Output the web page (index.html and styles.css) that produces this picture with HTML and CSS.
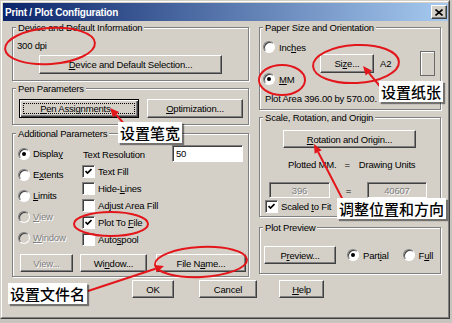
FILE: index.html
```html
<!DOCTYPE html>
<html lang="zh-CN">
<head>
  <meta charset="UTF-8" />
  <title>Print / Plot Configuration</title>
  <link rel="stylesheet" href="styles.css">
</head>
<body>

  <div class="window">
    <div class="frame">
      <div class="titlebar">
        <span class="title">Print / Plot Configuration</span>
        <span class="close"><svg width="8" height="7" viewBox="0 0 8 7"><path d="M0.5 0.5 L7.5 6.5 M7.5 0.5 L0.5 6.5" stroke="#000" stroke-width="1.6" /></svg></span>
      </div>

      <div class="client">
        <div class="columns">
          <div class="col col-left">

            <div class="group g-device">
              <div class="group-title">Device and Default Information</div>
              <div class="dpi">300 dpi</div>
              <button class="btn b-device"><u>D</u>evice and Default Selection...</button>
            </div>

            <div class="group g-pen">
              <div class="group-title">Pen Parameters</div>
              <div class="pen-row">
                <button class="btn btn-focus b-pen"><span class="focus"><u>P</u>en Assignments...</span></button>
                <button class="btn b-opt"><u>O</u>ptimization...</button>
              </div>
            </div>

            <div class="group g-add">
              <div class="group-title">Additional Parameters</div>
              <div class="add-body">
                <div class="area-col">
                  <label class="opt area"><span class="radio on"></span><span class="txt">Displa<u>y</u></span></label>
                  <label class="opt area"><span class="radio"></span><span class="txt">E<u>x</u>tents</span></label>
                  <label class="opt area"><span class="radio"></span><span class="txt"><u>L</u>imits</span></label>
                  <label class="opt area dis"><span class="radio"></span><span class="txt"><u>V</u>iew</span></label>
                  <label class="opt area dis"><span class="radio"></span><span class="txt"><u>W</u>indow</span></label>
                </div>
                <div class="param-col">
                  <div class="res-row"><span class="res-label">Text Resolution</span><span class="edit res-edit">50</span></div>
                  <label class="opt chk"><span class="check"><svg width="7" height="7" viewBox="0 0 7 7"><path d="M0.5 3 L2.5 5 L6.5 1" fill="none" stroke="#000" stroke-width="1.7" /></svg></span><span class="txt">Text Fill</span></label>
                  <label class="opt chk"><span class="check"></span><span class="txt">Hide-<u>L</u>ines</span></label>
                  <label class="opt chk"><span class="check"></span><span class="txt">Adjust Area Fill</span></label>
                  <label class="opt chk"><span class="check"><svg width="7" height="7" viewBox="0 0 7 7"><path d="M0.5 3 L2.5 5 L6.5 1" fill="none" stroke="#000" stroke-width="1.7" /></svg></span><span class="txt">Plot To <u>F</u>ile</span></label>
                  <label class="opt chk"><span class="check"></span><span class="txt">Auto<u>s</u>pool</span></label>
                </div>
              </div>
              <div class="add-buttons">
                <button class="btn dis b-view">View...</button>
                <button class="btn b-window">Wi<u>n</u>dow...</button>
                <button class="btn b-file">File N<u>a</u>me...</button>
              </div>
            </div>

          </div>

          <div class="col col-right">

            <div class="group g-paper">
              <div class="group-title">Paper Size and Orientation</div>
              <div class="paper-row">
                <div class="units">
                  <label class="opt"><span class="radio"></span><span class="txt">Inc<u>h</u>es</span></label>
                  <label class="opt"><span class="radio on"></span><span class="txt"><u>M</u>M</span></label>
                </div>
                <button class="btn b-size">Si<u>z</u>e...</button>
                <span class="size-name">A2</span>
                <span class="sheet"></span>
              </div>
              <div class="plot-area">Plot Area 396.00 by 570.00.</div>
            </div>

            <div class="group g-scale">
              <div class="group-title">Scale, Rotation, and Origin</div>
              <button class="btn b-rot"><u>R</u>otation and Origin...</button>
              <div class="units-line"><span>Plotted MM.</span><span class="eq">=</span><span class="du">Drawing Units</span></div>
              <div class="scale-row">
                <span class="edit dis-edit e-plot">396</span>
                <span class="eq2">=</span>
                <span class="edit dis-edit e-draw">40607</span>
              </div>
              <label class="opt fit"><span class="check"><svg width="7" height="7" viewBox="0 0 7 7"><path d="M0.5 3 L2.5 5 L6.5 1" fill="none" stroke="#000" stroke-width="1.7" /></svg></span><span class="txt">Scaled <u>t</u>o Fit</span></label>
            </div>

            <div class="group g-preview">
              <div class="group-title">Plot Preview</div>
              <div class="preview-row">
                <button class="btn b-preview">P<u>r</u>eview...</button>
                <label class="opt p-partial"><span class="radio on"></span><span class="txt">Part<u>i</u>al</span></label>
                <label class="opt p-full"><span class="radio"></span><span class="txt">F<u>u</u>ll</span></label>
              </div>
            </div>

          </div>
        </div>

        <div class="actions">
          <button class="btn b-ok">OK</button>
          <button class="btn b-cancel">Cancel</button>
          <button class="btn b-help"><u>H</u>elp</button>
        </div>
      </div>
    </div>
  </div>

  <!-- red marks drawn over the dialog -->
  <svg class="marks" width="452" height="323" viewBox="0 0 452 323">
    <g fill="none" stroke="#e3161b" stroke-width="2">
      <ellipse cx="50" cy="46" rx="45" ry="18" transform="rotate(-4 50 46)" />
      <ellipse cx="282" cy="80" rx="23" ry="15" />
      <ellipse cx="356" cy="64" rx="43" ry="19" transform="rotate(-3 356 64)" />
      <ellipse cx="111" cy="224" rx="37" ry="12" />
      <ellipse cx="201" cy="262" rx="46" ry="15" transform="rotate(-3 201 262)" />
      <line x1="383" y1="90" x2="368.8" y2="72.9" />
      <line x1="126" y1="126" x2="116" y2="114.7" />
      <line x1="345" y1="204" x2="318.1" y2="152" />
      <line x1="88" y1="291" x2="155.5" y2="268.8" />
    </g>
    <g fill="#e3161b">
      <polygon points="363,66 371.8,70.4 365.7,75.5" />
      <polygon points="110,108 119,112.1 113,117.4" />
      <polygon points="314,144 321.7,150.2 314.6,153.8" />
      <polygon points="164,266 156.7,272.6 154.2,265" />
    </g>
  </svg>

  <div class="note n-paper">设置纸张</div>
  <div class="note n-pen">设置笔宽</div>
  <div class="note n-origin">调整位置和方向</div>
  <div class="note n-file">设置文件名</div>

</body>
</html>
```

FILE: styles.css
```css
body { margin: 0; width: 452px; height: 323px; position: relative; overflow: hidden; background: #c8c5be; color: #000; font-family: "Liberation Sans", Arial, sans-serif; font-size: 9.5px; letter-spacing: -0.2px; line-height: 11px; }

/* window chrome */
.window { width: 450px; height: 319px; box-sizing: border-box; background: #d4d0c8; border: 1px solid; border-color: #d4d0c8 #404040 #404040 #d4d0c8; }
.frame { height: 100%; box-sizing: border-box; border: 1px solid; border-color: #fff #808080 #808080 #fff; padding: 1px 0 1px 1px; }
.titlebar { height: 18px; display: flex; align-items: center; padding: 0 1px 0 2px; background: linear-gradient(90deg, #0a246a, #a6caf0); }
.title { color: #fff; font-weight: bold; font-size: 10px; letter-spacing: -0.2px; }
.close { margin-left: auto; width: 16px; height: 14px; box-sizing: border-box; display: flex; align-items: center; justify-content: center; background: #d4d0c8; border: 1px solid; border-color: #fff #404040 #404040 #fff; box-shadow: inset -1px -1px 0 #808080; }

.client { padding-left: 9px; }
.columns { display: flex; }
.col { display: flex; flex-direction: column; }
.col-left { width: 237px; }
.col-right { width: 182px; margin-left: 10px; }

/* etched group boxes */
.group { box-sizing: border-box; border: 1px solid #808080; box-shadow: 1px 1px 0 #fff, inset 1px 1px 0 #fff; }
.group-title { width: max-content; height: 11px; margin: -6px 0 0 3px; padding: 0 2px; background: #d4d0c8; }

.g-device { margin-top: 6px; height: 54px; }
.g-pen { margin-top: 7px; height: 37px; }
.g-add { margin-top: 8px; height: 144px; }
.g-paper { margin-top: 6px; height: 83px; }
.g-scale { margin-top: 7px; height: 100px; }
.g-preview { margin-top: 10px; height: 47px; }

/* controls */
.btn { box-sizing: border-box; height: 19px; padding: 0; display: flex; align-items: center; justify-content: center; font: inherit; letter-spacing: inherit; color: #000; background: #d4d0c8; border: 1px solid; border-color: #fff #404040 #404040 #fff; box-shadow: inset -1px -1px 0 #808080; }
.btn-focus { border-color: #000; box-shadow: inset 1px 1px 0 #fff, inset -1px -1px 0 #404040, inset -2px -2px 0 #808080; }
.btn-focus .focus { flex: 1; align-self: stretch; margin: 3px; border: 1px dotted #000; display: flex; align-items: center; justify-content: center; }
.dis, .dis-edit { color: #808080; text-shadow: 1px 1px 0 #fff; }

.opt { display: flex; align-items: center; }
.radio { flex: none; width: 12px; height: 12px; box-sizing: border-box; border-radius: 50%; display: flex; align-items: center; justify-content: center; background: #fff; border: 1px solid; border-color: #808080 #fff #fff #808080; box-shadow: inset 1px 1px 0 #404040; }
.radio.on::after { content: ""; width: 4px; height: 4px; border-radius: 50%; background: #000; }
.dis .radio { background: #d4d0c8; }
.radio + .txt { margin-left: 3px; }
.check { flex: none; width: 13px; height: 13px; box-sizing: border-box; display: flex; align-items: center; justify-content: center; background: #fff; border: 1px solid; border-color: #808080 #fff #fff #808080; box-shadow: inset 1px 1px 0 #404040; }
.check + .txt { margin-left: 3px; }
.edit { box-sizing: border-box; display: flex; align-items: center; padding: 0 3px; background: #fff; border: 1px solid; border-color: #808080 #fff #fff #808080; box-shadow: inset 1px 1px 0 #404040; }
.dis-edit { background: #d4d0c8; justify-content: center; }

/* device */
.dpi { margin: 7px 0 0 4px; }
.b-device { margin: 4px 0 0 26px; width: 183px; }

/* pen */
.pen-row { display: flex; margin: 5px 0 0 6px; }
.b-pen { width: 120px; }
.b-opt { width: 96px; margin-left: 8px; }

/* additional */
.add-body { display: flex; }
.area-col { width: 64px; margin: 4px 0 0 5px; }
.area { height: 21px; }
.param-col { width: 161px; margin-top: 6px; }
.res-row { height: 18px; display: flex; align-items: center; justify-content: space-between; }
.res-label { margin-left: 1px; }
.res-edit { width: 71px; height: 17px; align-self: flex-start; }
.chk { height: 17px; }
.add-buttons { display: flex; margin: 6px 0 0 7px; }
.add-buttons .btn { height: 18px; }
.b-view { width: 53px; }
.b-window { width: 67px; margin-left: 7px; }
.b-file { width: 90px; margin-left: 9px; }

/* paper */
.paper-row { display: flex; align-items: center; height: 44px; margin-top: 8px; }
.units { width: 57px; height: 44px; margin-left: 3px; display: flex; flex-direction: column; justify-content: space-between; }
.units .opt { height: 12px; }
.units .txt { margin-left: 4px; }
.b-size { width: 54px; }
.size-name { margin-left: 6px; }
.sheet { width: 15px; height: 25px; box-sizing: border-box; margin: 0 5px 0 auto; border: 1px solid #6a6a6a; box-shadow: inset 1px 1px 0 #fff; }
.plot-area { margin: 8px 0 0 5px; }

/* scale */
.b-rot { width: 133px; height: 18px; margin: 7px 0 0 23px; }
.units-line { display: flex; margin: 11px 0 0 28px; }
.eq { margin-left: 8px; }
.du { margin-left: 9px; }
.scale-row { display: flex; align-items: center; height: 16px; margin: 12px 0 0 9px; }
.scale-row .edit { height: 16px; }
.e-plot { width: 61px; }
.e-draw { width: 60px; }
.eq2 { width: 37px; text-align: center; }
.fit { height: 13px; margin: 2px 0 0 5px; }

/* preview */
.preview-row { display: flex; align-items: center; height: 18px; margin: 13px 0 0 4px; }
.b-preview { width: 72px; height: 18px; }
.p-partial { margin-left: 11px; }
.p-full { margin-left: 14px; }
.preview-row .txt { margin-left: 4px; }

/* bottom buttons */
.actions { display: flex; margin: 3px 0 0 120px; }
.actions .btn { height: 18px; }
.b-ok { width: 42px; }
.b-cancel { width: 58px; margin-left: 25px; }
.b-help { width: 45px; margin-left: 22px; }

/* annotations over the dialog */
.marks { position: absolute; left: 0; top: 0; }
.note { position: absolute; padding: 0 2px; height: 21px; line-height: 21px; background: #fff; font-family: "Noto Sans CJK SC", sans-serif; font-size: 15px; font-weight: 500; letter-spacing: 0; color: #000; box-shadow: 2px 2px 1px rgba(0, 0, 0, 0.45); }
.n-paper { left: 379px; top: 81px; }
.n-pen { left: 118px; top: 122px; }
.n-origin { left: 337px; top: 198px; }
.n-file { left: 8px; top: 283px; }
```
